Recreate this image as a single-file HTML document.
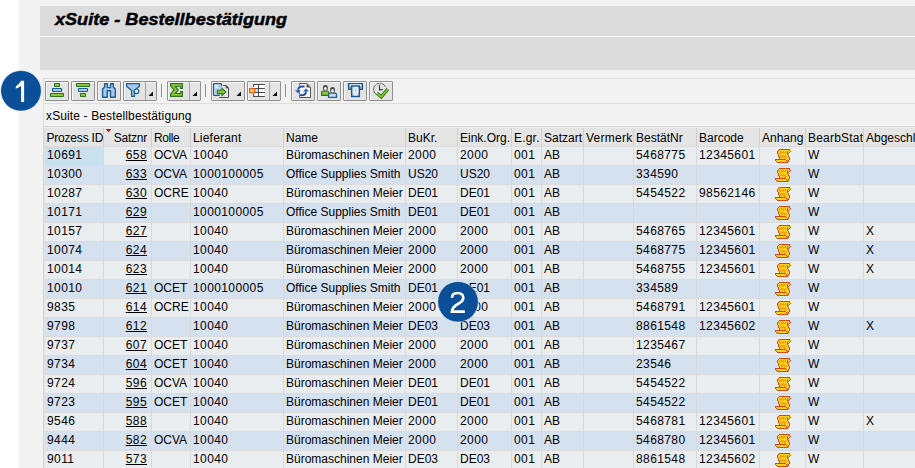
<!DOCTYPE html>
<html><head><meta charset="utf-8"><style>
*{margin:0;padding:0;box-sizing:border-box}
html,body{width:915px;height:468px;overflow:hidden;background:#fff;font-family:"Liberation Sans",sans-serif;font-size:12px;color:#000}
.abs{position:absolute}
#strip{position:absolute;left:19px;top:0;width:896px;height:468px;background:#f2f2f2}
#title{position:absolute;left:40px;top:6px;width:875px;height:30px;background:#dcdcdc}
#title span{position:absolute;left:15px;top:5px;font-size:16px;font-weight:bold;font-style:italic;white-space:nowrap;-webkit-text-stroke:0.45px #000;transform:scaleX(1.13);transform-origin:0 0}
#wl{position:absolute;left:40px;top:36px;width:875px;height:1px;background:#fafafa}
#box2{position:absolute;left:40px;top:37px;width:875px;height:33px;background:#dcdcdc}
#tb{position:absolute;left:43px;top:78px;width:872px;height:26px;border-top:1px solid #dedede;border-left:1px solid #dedede;border-bottom:1px solid #dedede;background:#f2f2f2}
#lbl{position:absolute;left:43px;top:104px;width:872px;height:23px;border-left:1px solid #dedede;background:#f2f2f2}
#lbl span{position:absolute;left:2px;top:5px;white-space:nowrap;letter-spacing:0.13px}
#hdrtop{position:absolute;left:43px;top:126px;width:872px;height:1px;background:#d8d8d8}
#hdrtop2{position:absolute;left:43px;top:127px;width:872px;height:1px;background:#eeeeee}
.hdrbg{position:absolute;left:43px;top:128px;width:872px;height:18px;background:#e5e5e5}
.hdrbot{position:absolute;left:43px;top:146px;width:872px;height:1px;background:#dcdcdc}
.vsep{position:absolute;top:128px;width:1px;height:18px;background:#cfcfcf}
.vsep2{position:absolute;top:147px;width:1px;height:321px;background:#d9d9d9}
.rowA,.rowB{position:absolute;left:45px;width:870px;height:18px}
.rowA{background:#eaedf0}
.rowB{background:#d6e1ef}
.gl{position:absolute;left:45px;width:870px;height:1px;background:#dcdcdc}
.selcell{position:absolute;left:45px;top:147px;width:58px;height:18px;background:#c9e0ee}
.h,.c{position:absolute;white-space:nowrap;overflow:hidden;padding:0 2px}
.h{line-height:20px}
.c{line-height:17px}
.c0{padding-left:3px}
.h0{padding-left:2.5px;letter-spacing:-0.2px}
.r{text-align:right;padding-right:4px}
.n{letter-spacing:0.4px}
.ic{position:absolute;overflow:hidden}
.scr{position:absolute;left:15px;top:2px}
#tableL{position:absolute;left:43px;top:126px;width:1px;height:342px;background:#d6d6d6}
#tableL2{position:absolute;left:44px;top:128px;width:1px;height:340px;background:#e2e2e2}
.badge{position:absolute;width:40px;height:40px;border-radius:50%;background:#044e96;color:#fff;font-size:29px;text-align:center;line-height:40px;box-shadow:0 0 0 1px rgba(255,255,255,0.8)}
</style></head><body>
<svg width="0" height="0" style="position:absolute"><defs><g id="scr"><path d="M4 0h1v1h-1zM5 0h1v1h-1zM6 0h1v1h-1zM7 0h1v1h-1zM8 0h1v1h-1zM9 0h1v1h-1zM10 0h1v1h-1zM11 0h1v1h-1zM12 0h1v1h-1zM13 0h1v1h-1zM14 0h1v1h-1zM3 1h1v1h-1zM14 1h1v1h-1zM2 2h1v1h-1zM12 2h1v1h-1zM15 2h1v1h-1zM2 3h1v1h-1zM12 3h1v1h-1zM14 3h1v1h-1zM2 4h1v1h-1zM12 4h1v1h-1zM13 4h1v1h-1zM3 5h1v1h-1zM12 5h1v1h-1zM3 6h1v1h-1zM13 6h1v1h-1zM3 7h1v1h-1zM13 7h1v1h-1zM4 8h1v1h-1zM14 8h1v1h-1zM4 9h1v1h-1zM14 9h1v1h-1zM0 10h1v1h-1zM1 10h1v1h-1zM2 10h1v1h-1zM3 10h1v1h-1zM4 10h1v1h-1zM5 10h1v1h-1zM6 10h1v1h-1zM7 10h1v1h-1zM8 10h1v1h-1zM9 10h1v1h-1zM10 10h1v1h-1zM14 10h1v1h-1zM0 11h1v1h-1zM11 11h1v1h-1zM13 11h1v1h-1zM1 12h1v1h-1zM12 12h1v1h-1zM13 12h1v1h-1zM2 13h1v1h-1zM3 13h1v1h-1zM4 13h1v1h-1zM5 13h1v1h-1zM6 13h1v1h-1zM7 13h1v1h-1zM8 13h1v1h-1zM9 13h1v1h-1zM10 13h1v1h-1zM11 13h1v1h-1zM12 13h1v1h-1z" fill="#d9470d"/><path d="M4 1h1v1h-1zM5 1h1v1h-1zM6 1h1v1h-1zM7 1h1v1h-1zM8 1h1v1h-1zM9 1h1v1h-1zM10 1h1v1h-1zM11 1h1v1h-1zM12 1h1v1h-1zM13 1h1v1h-1zM15 1h1v1h-1zM3 2h1v1h-1zM5 2h1v1h-1zM7 2h1v1h-1zM9 2h1v1h-1zM11 2h1v1h-1zM14 2h1v1h-1zM3 3h1v1h-1zM11 3h1v1h-1zM13 3h1v1h-1zM3 4h1v1h-1zM4 4h1v1h-1zM6 4h1v1h-1zM7 4h1v1h-1zM9 4h1v1h-1zM10 4h1v1h-1zM11 4h1v1h-1zM4 5h1v1h-1zM5 5h1v1h-1zM6 5h1v1h-1zM7 5h1v1h-1zM8 5h1v1h-1zM9 5h1v1h-1zM10 5h1v1h-1zM11 5h1v1h-1zM4 6h1v1h-1zM5 6h1v1h-1zM7 6h1v1h-1zM9 6h1v1h-1zM11 6h1v1h-1zM12 6h1v1h-1zM4 7h1v1h-1zM11 7h1v1h-1zM12 7h1v1h-1zM5 8h1v1h-1zM6 8h1v1h-1zM8 8h1v1h-1zM10 8h1v1h-1zM12 8h1v1h-1zM13 8h1v1h-1zM5 9h1v1h-1zM7 9h1v1h-1zM8 9h1v1h-1zM10 9h1v1h-1zM11 9h1v1h-1zM12 9h1v1h-1zM13 9h1v1h-1zM11 10h1v1h-1zM12 10h1v1h-1zM13 10h1v1h-1zM1 11h1v1h-1zM2 11h1v1h-1zM3 11h1v1h-1zM4 11h1v1h-1zM5 11h1v1h-1zM6 11h1v1h-1zM7 11h1v1h-1zM8 11h1v1h-1zM9 11h1v1h-1zM10 11h1v1h-1zM12 11h1v1h-1zM2 12h1v1h-1zM3 12h1v1h-1zM4 12h1v1h-1zM5 12h1v1h-1zM6 12h1v1h-1zM7 12h1v1h-1zM8 12h1v1h-1zM9 12h1v1h-1zM10 12h1v1h-1zM11 12h1v1h-1z" fill="#ffd21e"/><path d="M4 2h1v1h-1zM6 2h1v1h-1zM8 2h1v1h-1zM10 2h1v1h-1zM4 3h1v1h-1zM5 3h1v1h-1zM6 3h1v1h-1zM7 3h1v1h-1zM8 3h1v1h-1zM9 3h1v1h-1zM10 3h1v1h-1zM5 4h1v1h-1zM8 4h1v1h-1zM6 6h1v1h-1zM8 6h1v1h-1zM10 6h1v1h-1zM5 7h1v1h-1zM6 7h1v1h-1zM7 7h1v1h-1zM8 7h1v1h-1zM9 7h1v1h-1zM10 7h1v1h-1zM7 8h1v1h-1zM9 8h1v1h-1zM11 8h1v1h-1zM6 9h1v1h-1zM9 9h1v1h-1z" fill="#f59b12"/><path d="M13 2h1v1h-1z" fill="#fff0a0"/></g></defs></svg>
<div id="strip"></div>
<div id="title"><span>xSuite - Bestellbestätigung</span></div>
<div id="wl"></div>
<div id="box2"></div>
<div id="tb"></div>
<svg class="abs" style="left:0;top:0" width="915" height="104" viewBox="0 0 915 104"><rect x="45.5" y="81.5" width="23" height="19" rx="0.6" fill="#e3e3e3" stroke="#8f8f8f"/><path d="M46.5 100 V82.5 H68" fill="none" stroke="#f7f7f7"/><rect x="71.5" y="81.5" width="23" height="19" rx="0.6" fill="#e3e3e3" stroke="#8f8f8f"/><path d="M72.5 100 V82.5 H94" fill="none" stroke="#f7f7f7"/><rect x="97.5" y="81.5" width="23" height="19" rx="0.6" fill="#e3e3e3" stroke="#8f8f8f"/><path d="M98.5 100 V82.5 H120" fill="none" stroke="#f7f7f7"/><rect x="123.5" y="81.5" width="33" height="19" rx="0.6" fill="#e3e3e3" stroke="#8f8f8f"/><path d="M124.5 100 V82.5 H156" fill="none" stroke="#f7f7f7"/><line x1="145.5" y1="82" x2="145.5" y2="100" stroke="#a5a5a5"/><rect x="161" y="84" width="1" height="13" fill="#8c8c8c"/><rect x="162" y="84" width="1" height="13" fill="#fff" opacity="0.6"/><rect x="167.5" y="81.5" width="33" height="19" rx="0.6" fill="#e3e3e3" stroke="#8f8f8f"/><path d="M168.5 100 V82.5 H200" fill="none" stroke="#f7f7f7"/><line x1="189.5" y1="82" x2="189.5" y2="100" stroke="#a5a5a5"/><rect x="205" y="84" width="1" height="13" fill="#8c8c8c"/><rect x="206" y="84" width="1" height="13" fill="#fff" opacity="0.6"/><rect x="211.5" y="81.5" width="33" height="19" rx="0.6" fill="#e3e3e3" stroke="#8f8f8f"/><path d="M212.5 100 V82.5 H244" fill="none" stroke="#f7f7f7"/><rect x="247.5" y="81.5" width="33" height="19" rx="0.6" fill="#e3e3e3" stroke="#8f8f8f"/><path d="M248.5 100 V82.5 H280" fill="none" stroke="#f7f7f7"/><line x1="269.5" y1="82" x2="269.5" y2="100" stroke="#a5a5a5"/><rect x="285" y="84" width="1" height="13" fill="#8c8c8c"/><rect x="286" y="84" width="1" height="13" fill="#fff" opacity="0.6"/><rect x="291.5" y="81.5" width="23" height="19" rx="0.6" fill="#e3e3e3" stroke="#8f8f8f"/><path d="M292.5 100 V82.5 H314" fill="none" stroke="#f7f7f7"/><rect x="317.5" y="81.5" width="23" height="19" rx="0.6" fill="#e3e3e3" stroke="#8f8f8f"/><path d="M318.5 100 V82.5 H340" fill="none" stroke="#f7f7f7"/><rect x="343.5" y="81.5" width="23" height="19" rx="0.6" fill="#e3e3e3" stroke="#8f8f8f"/><path d="M344.5 100 V82.5 H366" fill="none" stroke="#f7f7f7"/><rect x="369.5" y="81.5" width="23" height="19" rx="0.6" fill="#e3e3e3" stroke="#8f8f8f"/><path d="M370.5 100 V82.5 H392" fill="none" stroke="#f7f7f7"/><path d="M148.4 96 L153 96 L153 91.4 Z" fill="#111"/><path d="M192.4 96 L197 96 L197 91.4 Z" fill="#111"/><path d="M236.4 96 L241 96 L241 91.4 Z" fill="#111"/><path d="M272.4 96 L277 96 L277 91.4 Z" fill="#111"/><rect x="54.5" y="83.5" width="5" height="3" rx="0.4" fill="#8cc63a" stroke="#2f7420" stroke-width="1.1"/><rect x="52.5" y="88.5" width="9" height="3" rx="0.4" fill="#a9c8e6" stroke="#17609a" stroke-width="1.1"/><rect x="50.5" y="93.5" width="13" height="3" rx="0.4" fill="#8cc63a" stroke="#2f7420" stroke-width="1.1"/><rect x="76.5" y="83.5" width="13" height="3" rx="0.4" fill="#8cc63a" stroke="#2f7420" stroke-width="1.1"/><rect x="78.5" y="88.5" width="9" height="3" rx="0.4" fill="#a9c8e6" stroke="#17609a" stroke-width="1.1"/><rect x="80.5" y="93.5" width="5" height="3" rx="0.4" fill="#8cc63a" stroke="#2f7420" stroke-width="1.1"/><path d="M104.6 83.7 H107.3 V87.6 H110.5 V83.7 H113.3 V87 L115.3 89 V97.3 H110.5 V90.7 H107.3 V97.3 H102.6 V89 L104.6 87 Z" fill="#a9c8e6" stroke="#17609a" stroke-width="1.4" stroke-linejoin="round"/><path d="M126.6 83.6 H139.4 V86.3 L134.4 90.4 V96.4 H131.6 V90.4 L126.6 86.3 Z" fill="#a9c8e6" stroke="#17609a" stroke-width="1.3" stroke-linejoin="round"/><circle cx="136.5" cy="91.3" r="2.3" fill="#eef2f5" stroke="#17609a" stroke-width="1.2"/><rect x="175.5" y="86.5" width="6" height="7" fill="#fafafa"/><path d="M170.6 83.6 H182.4 V88.3 H180.3 V86.5 H175.4 L178.4 90 L175.4 93.5 H180.3 V91.7 H182.4 V96.4 H170.6 V94.3 L174 90 L170.6 85.7 Z" fill="#8cc63a" stroke="#2f7420" stroke-width="1.2" stroke-linejoin="miter"/><path d="M223 85.5 H226.2 L228.5 87.8 V97.5 H219.2" fill="none" stroke="#505050" stroke-width="1"/><path d="M226 85.5 V88 H228.5 Z" fill="#505050" stroke="#505050" stroke-width="0.6"/><path d="M221.4 86.3 V84.3 Q221.4 83.6 220.6 83.6 H214.2 Q213.5 83.6 213.5 84.3 V94.8 Q213.5 95.4 214.2 95.4 H219.7" fill="#a9c8e6" stroke="#17609a" stroke-width="1.3"/><rect x="214.3" y="84.4" width="6.4" height="10.3" fill="#b3cfe9"/><path d="M214.8 85.6 H218 M214.8 87.4 H218" stroke="#fff" stroke-width="0.9"/><path d="M217.4 90.2 H222 V88.2 L225.8 91.9 L222 95.5 V93.6 H217.4 Z" fill="#8cc63a" stroke="#2f7420" stroke-width="1.1" stroke-linejoin="miter"/><rect x="254" y="85" width="10.5" height="12" fill="#fff"/><path d="M254 84.5 H264.8 M254 88.5 H264.8 M254 92.5 H264.8 M254 96.5 H264.8 M258.5 84.5 V96.5 M253.7 84 V87 M253.7 93.5 V97" stroke="#4a4a4a" stroke-width="1.1"/><rect x="255" y="89" width="3" height="3" fill="#d4d4d4"/><rect x="249.6" y="88.6" width="5" height="4" fill="#f9d548" stroke="#e4632a" stroke-width="1.3"/><path d="M299.5 83.5 H306.8 L310.5 87.2 V97.5 H299.5 Z" fill="#fff" stroke="#505050" stroke-width="1"/><path d="M306.5 83.5 L310.5 87.5 H306.5 Z" fill="#505050"/><path d="M298 90.6 Q298.2 86.6 302 86.6 H304.6" fill="none" stroke="#fff" stroke-width="3" opacity="0.9"/><path d="M306 91.4 Q305.8 95.2 302 95.2 H299.4" fill="none" stroke="#fff" stroke-width="3" opacity="0.9"/><path d="M298 90.6 Q298.2 86.6 302 86.6 H304.6" fill="none" stroke="#1c4ea6" stroke-width="2"/><path d="M306 91.4 Q305.8 95.2 302 95.2 H299.4" fill="none" stroke="#1c4ea6" stroke-width="2"/><path d="M294.8 90 H301.2 L298 93.6 Z M302.8 91.8 H309.2 L306 88.2 Z" fill="#1c4ea6" stroke="#fff" stroke-width="0.4"/><path d="M321.6 95.3 V92.6 Q321.6 91 323.3 91 H327 Q328.6 91 328.6 92.6 V95.3 Z" fill="#8cc63a" stroke="#2f7420" stroke-width="1.2"/><ellipse cx="325.4" cy="87.9" rx="2.5" ry="2.9" fill="#474747"/><ellipse cx="325.4" cy="88.6" rx="1.3" ry="1.8" fill="#fff"/><path d="M328.6 97.4 V94.7 Q328.6 93.1 330.3 93.1 H334.8 Q336.5 93.1 336.5 94.7 V97.4 Z" fill="#c8def2" stroke="#17609a" stroke-width="1.3"/><ellipse cx="332.5" cy="90" rx="2.5" ry="2.9" fill="#474747"/><ellipse cx="332.5" cy="90.7" rx="1.3" ry="1.8" fill="#fff"/><rect x="348.7" y="83.7" width="13.6" height="5.5" fill="#e8eef4" stroke="#0f5996" stroke-width="1.5"/><rect x="349.5" y="84.4" width="12" height="1" fill="#fff"/><rect x="349.3" y="86.3" width="1.5" height="2.4" fill="#9d8576"/><rect x="360.2" y="86.3" width="1.5" height="2.4" fill="#9d8576"/><rect x="351.7" y="86" width="7.6" height="10.4" fill="#fff" stroke="#0f5996" stroke-width="1.5"/><path d="M352.5 86.8 L356 90.5 L352.5 95.8 M358.5 86.8 L355 90.5 L358.5 95.8" stroke="#3d6fa6" stroke-width="0.6" stroke-dasharray="1 0.6" fill="none"/><path d="M385.3 86.6 A6.2 6.2 0 1 0 376 94.4" fill="none" stroke="#3d3d3d" stroke-width="1" stroke-dasharray="1.8 0.7"/><path d="M379.5 85 V90.4 M379.5 89.6 H382.8" fill="none" stroke="#3d3d3d" stroke-width="1.1"/><path d="M377 93.3 L381.3 96.8 L387.8 89.2" fill="none" stroke="#2f7420" stroke-width="3.4" stroke-linejoin="miter"/><path d="M377 93.3 L381.3 96.8 L387.8 89.2" fill="none" stroke="#86c630" stroke-width="1.6" stroke-linejoin="miter"/></svg>
<div id="lbl"><span>xSuite - Bestellbestätigung</span></div>
<div id="hdrtop"></div><div id="hdrtop2"></div>
<div class="hdrbg"></div><div class="hdrbot"></div>
<div class="vsep" style="left:103px"></div>
<div class="vsep" style="left:151px"></div>
<div class="vsep" style="left:190px"></div>
<div class="vsep" style="left:283px"></div>
<div class="vsep" style="left:405px"></div>
<div class="vsep" style="left:457px"></div>
<div class="vsep" style="left:511px"></div>
<div class="vsep" style="left:541px"></div>
<div class="vsep" style="left:583px"></div>
<div class="vsep" style="left:633px"></div>
<div class="vsep" style="left:696px"></div>
<div class="vsep" style="left:759px"></div>
<div class="vsep" style="left:805px"></div>
<div class="vsep" style="left:863px"></div>
<div class="h h0" style="left:44px;top:128px;width:59px;height:18px">Prozess ID</div>
<div class="h r" style="left:104px;top:128px;width:47px;height:18px;letter-spacing:-0.25px">Satznr</div>
<div class="h" style="left:152px;top:128px;width:38px;height:18px;letter-spacing:-0.4px">Rolle</div>
<div class="h" style="left:191px;top:128px;width:92px;height:18px;letter-spacing:0.2px">Lieferant</div>
<div class="h" style="left:284px;top:128px;width:121px;height:18px">Name</div>
<div class="h" style="left:406px;top:128px;width:51px;height:18px">BuKr.</div>
<div class="h" style="left:458px;top:128px;width:53px;height:18px">Eink.Org.</div>
<div class="h" style="left:512px;top:128px;width:29px;height:18px;letter-spacing:0.2px">E.gr.</div>
<div class="h" style="left:542px;top:128px;width:41px;height:18px">Satzart</div>
<div class="h" style="left:584px;top:128px;width:49px;height:18px;letter-spacing:0.25px">Vermerk</div>
<div class="h" style="left:634px;top:128px;width:62px;height:18px">BestätNr</div>
<div class="h" style="left:697px;top:128px;width:62px;height:18px">Barcode</div>
<div class="h" style="left:760px;top:128px;width:45px;height:18px">Anhang</div>
<div class="h" style="left:806px;top:128px;width:57px;height:18px;letter-spacing:0.2px">BearbStat</div>
<div class="h" style="left:864px;top:128px;width:136px;height:18px">Abgeschl</div>
<svg class="abs" style="left:105px;top:128px" width="8" height="6"><path d="M0.8 1 H6.2 L3.5 4.2 Z" fill="#c8001e"/></svg>
<div class="rowA" style="top:147px"></div>
<div class="gl" style="top:165px"></div>
<div class="rowB" style="top:166px"></div>
<div class="gl" style="top:184px"></div>
<div class="rowA" style="top:185px"></div>
<div class="gl" style="top:203px"></div>
<div class="rowB" style="top:204px"></div>
<div class="gl" style="top:222px"></div>
<div class="rowA" style="top:223px"></div>
<div class="gl" style="top:241px"></div>
<div class="rowB" style="top:242px"></div>
<div class="gl" style="top:260px"></div>
<div class="rowA" style="top:261px"></div>
<div class="gl" style="top:279px"></div>
<div class="rowB" style="top:280px"></div>
<div class="gl" style="top:298px"></div>
<div class="rowA" style="top:299px"></div>
<div class="gl" style="top:317px"></div>
<div class="rowB" style="top:318px"></div>
<div class="gl" style="top:336px"></div>
<div class="rowA" style="top:337px"></div>
<div class="gl" style="top:355px"></div>
<div class="rowB" style="top:356px"></div>
<div class="gl" style="top:374px"></div>
<div class="rowA" style="top:375px"></div>
<div class="gl" style="top:393px"></div>
<div class="rowB" style="top:394px"></div>
<div class="gl" style="top:412px"></div>
<div class="rowA" style="top:413px"></div>
<div class="gl" style="top:431px"></div>
<div class="rowB" style="top:432px"></div>
<div class="gl" style="top:450px"></div>
<div class="rowA" style="top:451px"></div>
<div class="gl" style="top:469px"></div>
<div class="selcell"></div>
<div class="vsep2" style="left:103px"></div>
<div class="vsep2" style="left:151px"></div>
<div class="vsep2" style="left:190px"></div>
<div class="vsep2" style="left:283px"></div>
<div class="vsep2" style="left:405px"></div>
<div class="vsep2" style="left:457px"></div>
<div class="vsep2" style="left:511px"></div>
<div class="vsep2" style="left:541px"></div>
<div class="vsep2" style="left:583px"></div>
<div class="vsep2" style="left:633px"></div>
<div class="vsep2" style="left:696px"></div>
<div class="vsep2" style="left:759px"></div>
<div class="vsep2" style="left:805px"></div>
<div class="vsep2" style="left:863px"></div>
<div class="c c0 n" style="left:44px;top:147px;width:59px;height:18px">10691</div>
<div class="c r n" style="left:104px;top:147px;width:47px;height:18px"><u>658</u></div>
<div class="c" style="left:152px;top:147px;width:38px;height:18px">OCVA</div>
<div class="c n" style="left:191px;top:147px;width:92px;height:18px">10040</div>
<div class="c" style="left:284px;top:147px;width:121px;height:18px">Büromaschinen Meier</div>
<div class="c n" style="left:406px;top:147px;width:51px;height:18px">2000</div>
<div class="c n" style="left:458px;top:147px;width:53px;height:18px">2000</div>
<div class="c n" style="left:512px;top:147px;width:29px;height:18px">001</div>
<div class="c" style="left:542px;top:147px;width:41px;height:18px">AB</div>
<div class="c n" style="left:634px;top:147px;width:62px;height:18px">5468775</div>
<div class="c n" style="left:697px;top:147px;width:62px;height:18px">12345601</div>
<div class="ic" style="left:760px;top:147px;width:45px;height:18px"><svg class="scr" width="16" height="14" viewBox="0 0 16 14" shape-rendering="crispEdges"><use href="#scr"/></svg></div>
<div class="c" style="left:806px;top:147px;width:57px;height:18px">W</div>
<div class="c c0 n" style="left:44px;top:166px;width:59px;height:18px">10300</div>
<div class="c r n" style="left:104px;top:166px;width:47px;height:18px"><u>633</u></div>
<div class="c" style="left:152px;top:166px;width:38px;height:18px">OCVA</div>
<div class="c n" style="left:191px;top:166px;width:92px;height:18px">1000100005</div>
<div class="c" style="left:284px;top:166px;width:121px;height:18px">Office Supplies Smith</div>
<div class="c" style="left:406px;top:166px;width:51px;height:18px">US20</div>
<div class="c" style="left:458px;top:166px;width:53px;height:18px">US20</div>
<div class="c n" style="left:512px;top:166px;width:29px;height:18px">001</div>
<div class="c" style="left:542px;top:166px;width:41px;height:18px">AB</div>
<div class="c n" style="left:634px;top:166px;width:62px;height:18px">334590</div>
<div class="ic" style="left:760px;top:166px;width:45px;height:18px"><svg class="scr" width="16" height="14" viewBox="0 0 16 14" shape-rendering="crispEdges"><use href="#scr"/></svg></div>
<div class="c" style="left:806px;top:166px;width:57px;height:18px">W</div>
<div class="c c0 n" style="left:44px;top:185px;width:59px;height:18px">10287</div>
<div class="c r n" style="left:104px;top:185px;width:47px;height:18px"><u>630</u></div>
<div class="c" style="left:152px;top:185px;width:38px;height:18px">OCRE</div>
<div class="c n" style="left:191px;top:185px;width:92px;height:18px">10040</div>
<div class="c" style="left:284px;top:185px;width:121px;height:18px">Büromaschinen Meier</div>
<div class="c" style="left:406px;top:185px;width:51px;height:18px">DE01</div>
<div class="c" style="left:458px;top:185px;width:53px;height:18px">DE01</div>
<div class="c n" style="left:512px;top:185px;width:29px;height:18px">001</div>
<div class="c" style="left:542px;top:185px;width:41px;height:18px">AB</div>
<div class="c n" style="left:634px;top:185px;width:62px;height:18px">5454522</div>
<div class="c n" style="left:697px;top:185px;width:62px;height:18px">98562146</div>
<div class="ic" style="left:760px;top:185px;width:45px;height:18px"><svg class="scr" width="16" height="14" viewBox="0 0 16 14" shape-rendering="crispEdges"><use href="#scr"/></svg></div>
<div class="c" style="left:806px;top:185px;width:57px;height:18px">W</div>
<div class="c c0 n" style="left:44px;top:204px;width:59px;height:18px">10171</div>
<div class="c r n" style="left:104px;top:204px;width:47px;height:18px"><u>629</u></div>
<div class="c n" style="left:191px;top:204px;width:92px;height:18px">1000100005</div>
<div class="c" style="left:284px;top:204px;width:121px;height:18px">Office Supplies Smith</div>
<div class="c" style="left:406px;top:204px;width:51px;height:18px">DE01</div>
<div class="c" style="left:458px;top:204px;width:53px;height:18px">DE01</div>
<div class="c n" style="left:512px;top:204px;width:29px;height:18px">001</div>
<div class="c" style="left:542px;top:204px;width:41px;height:18px">AB</div>
<div class="ic" style="left:760px;top:204px;width:45px;height:18px"><svg class="scr" width="16" height="14" viewBox="0 0 16 14" shape-rendering="crispEdges"><use href="#scr"/></svg></div>
<div class="c" style="left:806px;top:204px;width:57px;height:18px">W</div>
<div class="c c0 n" style="left:44px;top:223px;width:59px;height:18px">10157</div>
<div class="c r n" style="left:104px;top:223px;width:47px;height:18px"><u>627</u></div>
<div class="c n" style="left:191px;top:223px;width:92px;height:18px">10040</div>
<div class="c" style="left:284px;top:223px;width:121px;height:18px">Büromaschinen Meier</div>
<div class="c n" style="left:406px;top:223px;width:51px;height:18px">2000</div>
<div class="c n" style="left:458px;top:223px;width:53px;height:18px">2000</div>
<div class="c n" style="left:512px;top:223px;width:29px;height:18px">001</div>
<div class="c" style="left:542px;top:223px;width:41px;height:18px">AB</div>
<div class="c n" style="left:634px;top:223px;width:62px;height:18px">5468765</div>
<div class="c n" style="left:697px;top:223px;width:62px;height:18px">12345601</div>
<div class="ic" style="left:760px;top:223px;width:45px;height:18px"><svg class="scr" width="16" height="14" viewBox="0 0 16 14" shape-rendering="crispEdges"><use href="#scr"/></svg></div>
<div class="c" style="left:806px;top:223px;width:57px;height:18px">W</div>
<div class="c" style="left:864px;top:223px;width:136px;height:18px">X</div>
<div class="c c0 n" style="left:44px;top:242px;width:59px;height:18px">10074</div>
<div class="c r n" style="left:104px;top:242px;width:47px;height:18px"><u>624</u></div>
<div class="c n" style="left:191px;top:242px;width:92px;height:18px">10040</div>
<div class="c" style="left:284px;top:242px;width:121px;height:18px">Büromaschinen Meier</div>
<div class="c n" style="left:406px;top:242px;width:51px;height:18px">2000</div>
<div class="c n" style="left:458px;top:242px;width:53px;height:18px">2000</div>
<div class="c n" style="left:512px;top:242px;width:29px;height:18px">001</div>
<div class="c" style="left:542px;top:242px;width:41px;height:18px">AB</div>
<div class="c n" style="left:634px;top:242px;width:62px;height:18px">5468775</div>
<div class="c n" style="left:697px;top:242px;width:62px;height:18px">12345601</div>
<div class="ic" style="left:760px;top:242px;width:45px;height:18px"><svg class="scr" width="16" height="14" viewBox="0 0 16 14" shape-rendering="crispEdges"><use href="#scr"/></svg></div>
<div class="c" style="left:806px;top:242px;width:57px;height:18px">W</div>
<div class="c" style="left:864px;top:242px;width:136px;height:18px">X</div>
<div class="c c0 n" style="left:44px;top:261px;width:59px;height:18px">10014</div>
<div class="c r n" style="left:104px;top:261px;width:47px;height:18px"><u>623</u></div>
<div class="c n" style="left:191px;top:261px;width:92px;height:18px">10040</div>
<div class="c" style="left:284px;top:261px;width:121px;height:18px">Büromaschinen Meier</div>
<div class="c n" style="left:406px;top:261px;width:51px;height:18px">2000</div>
<div class="c n" style="left:458px;top:261px;width:53px;height:18px">2000</div>
<div class="c n" style="left:512px;top:261px;width:29px;height:18px">001</div>
<div class="c" style="left:542px;top:261px;width:41px;height:18px">AB</div>
<div class="c n" style="left:634px;top:261px;width:62px;height:18px">5468755</div>
<div class="c n" style="left:697px;top:261px;width:62px;height:18px">12345601</div>
<div class="ic" style="left:760px;top:261px;width:45px;height:18px"><svg class="scr" width="16" height="14" viewBox="0 0 16 14" shape-rendering="crispEdges"><use href="#scr"/></svg></div>
<div class="c" style="left:806px;top:261px;width:57px;height:18px">W</div>
<div class="c" style="left:864px;top:261px;width:136px;height:18px">X</div>
<div class="c c0 n" style="left:44px;top:280px;width:59px;height:18px">10010</div>
<div class="c r n" style="left:104px;top:280px;width:47px;height:18px"><u>621</u></div>
<div class="c" style="left:152px;top:280px;width:38px;height:18px">OCET</div>
<div class="c n" style="left:191px;top:280px;width:92px;height:18px">1000100005</div>
<div class="c" style="left:284px;top:280px;width:121px;height:18px">Office Supplies Smith</div>
<div class="c" style="left:406px;top:280px;width:51px;height:18px">DE01</div>
<div class="c" style="left:458px;top:280px;width:53px;height:18px">DE01</div>
<div class="c n" style="left:512px;top:280px;width:29px;height:18px">001</div>
<div class="c" style="left:542px;top:280px;width:41px;height:18px">AB</div>
<div class="c n" style="left:634px;top:280px;width:62px;height:18px">334589</div>
<div class="ic" style="left:760px;top:280px;width:45px;height:18px"><svg class="scr" width="16" height="14" viewBox="0 0 16 14" shape-rendering="crispEdges"><use href="#scr"/></svg></div>
<div class="c" style="left:806px;top:280px;width:57px;height:18px">W</div>
<div class="c c0 n" style="left:44px;top:299px;width:59px;height:18px">9835</div>
<div class="c r n" style="left:104px;top:299px;width:47px;height:18px"><u>614</u></div>
<div class="c" style="left:152px;top:299px;width:38px;height:18px">OCRE</div>
<div class="c n" style="left:191px;top:299px;width:92px;height:18px">10040</div>
<div class="c" style="left:284px;top:299px;width:121px;height:18px">Büromaschinen Meier</div>
<div class="c n" style="left:406px;top:299px;width:51px;height:18px">2000</div>
<div class="c n" style="left:458px;top:299px;width:53px;height:18px">2000</div>
<div class="c n" style="left:512px;top:299px;width:29px;height:18px">001</div>
<div class="c" style="left:542px;top:299px;width:41px;height:18px">AB</div>
<div class="c n" style="left:634px;top:299px;width:62px;height:18px">5468791</div>
<div class="c n" style="left:697px;top:299px;width:62px;height:18px">12345601</div>
<div class="ic" style="left:760px;top:299px;width:45px;height:18px"><svg class="scr" width="16" height="14" viewBox="0 0 16 14" shape-rendering="crispEdges"><use href="#scr"/></svg></div>
<div class="c" style="left:806px;top:299px;width:57px;height:18px">W</div>
<div class="c c0 n" style="left:44px;top:318px;width:59px;height:18px">9798</div>
<div class="c r n" style="left:104px;top:318px;width:47px;height:18px"><u>612</u></div>
<div class="c n" style="left:191px;top:318px;width:92px;height:18px">10040</div>
<div class="c" style="left:284px;top:318px;width:121px;height:18px">Büromaschinen Meier</div>
<div class="c" style="left:406px;top:318px;width:51px;height:18px">DE03</div>
<div class="c" style="left:458px;top:318px;width:53px;height:18px">DE03</div>
<div class="c n" style="left:512px;top:318px;width:29px;height:18px">001</div>
<div class="c" style="left:542px;top:318px;width:41px;height:18px">AB</div>
<div class="c n" style="left:634px;top:318px;width:62px;height:18px">8861548</div>
<div class="c n" style="left:697px;top:318px;width:62px;height:18px">12345602</div>
<div class="ic" style="left:760px;top:318px;width:45px;height:18px"><svg class="scr" width="16" height="14" viewBox="0 0 16 14" shape-rendering="crispEdges"><use href="#scr"/></svg></div>
<div class="c" style="left:806px;top:318px;width:57px;height:18px">W</div>
<div class="c" style="left:864px;top:318px;width:136px;height:18px">X</div>
<div class="c c0 n" style="left:44px;top:337px;width:59px;height:18px">9737</div>
<div class="c r n" style="left:104px;top:337px;width:47px;height:18px"><u>607</u></div>
<div class="c" style="left:152px;top:337px;width:38px;height:18px">OCET</div>
<div class="c n" style="left:191px;top:337px;width:92px;height:18px">10040</div>
<div class="c" style="left:284px;top:337px;width:121px;height:18px">Büromaschinen Meier</div>
<div class="c n" style="left:406px;top:337px;width:51px;height:18px">2000</div>
<div class="c n" style="left:458px;top:337px;width:53px;height:18px">2000</div>
<div class="c n" style="left:512px;top:337px;width:29px;height:18px">001</div>
<div class="c" style="left:542px;top:337px;width:41px;height:18px">AB</div>
<div class="c n" style="left:634px;top:337px;width:62px;height:18px">1235467</div>
<div class="ic" style="left:760px;top:337px;width:45px;height:18px"><svg class="scr" width="16" height="14" viewBox="0 0 16 14" shape-rendering="crispEdges"><use href="#scr"/></svg></div>
<div class="c" style="left:806px;top:337px;width:57px;height:18px">W</div>
<div class="c c0 n" style="left:44px;top:356px;width:59px;height:18px">9734</div>
<div class="c r n" style="left:104px;top:356px;width:47px;height:18px"><u>604</u></div>
<div class="c" style="left:152px;top:356px;width:38px;height:18px">OCET</div>
<div class="c n" style="left:191px;top:356px;width:92px;height:18px">10040</div>
<div class="c" style="left:284px;top:356px;width:121px;height:18px">Büromaschinen Meier</div>
<div class="c n" style="left:406px;top:356px;width:51px;height:18px">2000</div>
<div class="c n" style="left:458px;top:356px;width:53px;height:18px">2000</div>
<div class="c n" style="left:512px;top:356px;width:29px;height:18px">001</div>
<div class="c" style="left:542px;top:356px;width:41px;height:18px">AB</div>
<div class="c n" style="left:634px;top:356px;width:62px;height:18px">23546</div>
<div class="ic" style="left:760px;top:356px;width:45px;height:18px"><svg class="scr" width="16" height="14" viewBox="0 0 16 14" shape-rendering="crispEdges"><use href="#scr"/></svg></div>
<div class="c" style="left:806px;top:356px;width:57px;height:18px">W</div>
<div class="c c0 n" style="left:44px;top:375px;width:59px;height:18px">9724</div>
<div class="c r n" style="left:104px;top:375px;width:47px;height:18px"><u>596</u></div>
<div class="c" style="left:152px;top:375px;width:38px;height:18px">OCVA</div>
<div class="c n" style="left:191px;top:375px;width:92px;height:18px">10040</div>
<div class="c" style="left:284px;top:375px;width:121px;height:18px">Büromaschinen Meier</div>
<div class="c" style="left:406px;top:375px;width:51px;height:18px">DE01</div>
<div class="c" style="left:458px;top:375px;width:53px;height:18px">DE01</div>
<div class="c n" style="left:512px;top:375px;width:29px;height:18px">001</div>
<div class="c" style="left:542px;top:375px;width:41px;height:18px">AB</div>
<div class="c n" style="left:634px;top:375px;width:62px;height:18px">5454522</div>
<div class="ic" style="left:760px;top:375px;width:45px;height:18px"><svg class="scr" width="16" height="14" viewBox="0 0 16 14" shape-rendering="crispEdges"><use href="#scr"/></svg></div>
<div class="c" style="left:806px;top:375px;width:57px;height:18px">W</div>
<div class="c c0 n" style="left:44px;top:394px;width:59px;height:18px">9723</div>
<div class="c r n" style="left:104px;top:394px;width:47px;height:18px"><u>595</u></div>
<div class="c" style="left:152px;top:394px;width:38px;height:18px">OCET</div>
<div class="c n" style="left:191px;top:394px;width:92px;height:18px">10040</div>
<div class="c" style="left:284px;top:394px;width:121px;height:18px">Büromaschinen Meier</div>
<div class="c" style="left:406px;top:394px;width:51px;height:18px">DE01</div>
<div class="c" style="left:458px;top:394px;width:53px;height:18px">DE01</div>
<div class="c n" style="left:512px;top:394px;width:29px;height:18px">001</div>
<div class="c" style="left:542px;top:394px;width:41px;height:18px">AB</div>
<div class="c n" style="left:634px;top:394px;width:62px;height:18px">5454522</div>
<div class="ic" style="left:760px;top:394px;width:45px;height:18px"><svg class="scr" width="16" height="14" viewBox="0 0 16 14" shape-rendering="crispEdges"><use href="#scr"/></svg></div>
<div class="c" style="left:806px;top:394px;width:57px;height:18px">W</div>
<div class="c c0 n" style="left:44px;top:413px;width:59px;height:18px">9546</div>
<div class="c r n" style="left:104px;top:413px;width:47px;height:18px"><u>588</u></div>
<div class="c n" style="left:191px;top:413px;width:92px;height:18px">10040</div>
<div class="c" style="left:284px;top:413px;width:121px;height:18px">Büromaschinen Meier</div>
<div class="c n" style="left:406px;top:413px;width:51px;height:18px">2000</div>
<div class="c n" style="left:458px;top:413px;width:53px;height:18px">2000</div>
<div class="c n" style="left:512px;top:413px;width:29px;height:18px">001</div>
<div class="c" style="left:542px;top:413px;width:41px;height:18px">AB</div>
<div class="c n" style="left:634px;top:413px;width:62px;height:18px">5468781</div>
<div class="c n" style="left:697px;top:413px;width:62px;height:18px">12345601</div>
<div class="ic" style="left:760px;top:413px;width:45px;height:18px"><svg class="scr" width="16" height="14" viewBox="0 0 16 14" shape-rendering="crispEdges"><use href="#scr"/></svg></div>
<div class="c" style="left:806px;top:413px;width:57px;height:18px">W</div>
<div class="c" style="left:864px;top:413px;width:136px;height:18px">X</div>
<div class="c c0 n" style="left:44px;top:432px;width:59px;height:18px">9444</div>
<div class="c r n" style="left:104px;top:432px;width:47px;height:18px"><u>582</u></div>
<div class="c" style="left:152px;top:432px;width:38px;height:18px">OCVA</div>
<div class="c n" style="left:191px;top:432px;width:92px;height:18px">10040</div>
<div class="c" style="left:284px;top:432px;width:121px;height:18px">Büromaschinen Meier</div>
<div class="c n" style="left:406px;top:432px;width:51px;height:18px">2000</div>
<div class="c n" style="left:458px;top:432px;width:53px;height:18px">2000</div>
<div class="c n" style="left:512px;top:432px;width:29px;height:18px">001</div>
<div class="c" style="left:542px;top:432px;width:41px;height:18px">AB</div>
<div class="c n" style="left:634px;top:432px;width:62px;height:18px">5468780</div>
<div class="c n" style="left:697px;top:432px;width:62px;height:18px">12345601</div>
<div class="ic" style="left:760px;top:432px;width:45px;height:18px"><svg class="scr" width="16" height="14" viewBox="0 0 16 14" shape-rendering="crispEdges"><use href="#scr"/></svg></div>
<div class="c" style="left:806px;top:432px;width:57px;height:18px">W</div>
<div class="c c0 n" style="left:44px;top:451px;width:59px;height:18px">9011</div>
<div class="c r n" style="left:104px;top:451px;width:47px;height:18px"><u>573</u></div>
<div class="c n" style="left:191px;top:451px;width:92px;height:18px">10040</div>
<div class="c" style="left:284px;top:451px;width:121px;height:18px">Büromaschinen Meier</div>
<div class="c" style="left:406px;top:451px;width:51px;height:18px">DE03</div>
<div class="c" style="left:458px;top:451px;width:53px;height:18px">DE03</div>
<div class="c n" style="left:512px;top:451px;width:29px;height:18px">001</div>
<div class="c" style="left:542px;top:451px;width:41px;height:18px">AB</div>
<div class="c n" style="left:634px;top:451px;width:62px;height:18px">8861548</div>
<div class="c n" style="left:697px;top:451px;width:62px;height:18px">12345602</div>
<div class="ic" style="left:760px;top:451px;width:45px;height:18px"><svg class="scr" width="16" height="14" viewBox="0 0 16 14" shape-rendering="crispEdges"><use href="#scr"/></svg></div>
<div class="c" style="left:806px;top:451px;width:57px;height:18px">W</div>
<div id="tableL"></div><div id="tableL2"></div>
<svg class="abs" style="left:0;top:0" width="915" height="468" viewBox="0 0 915 468">
<circle cx="21" cy="90.8" r="20.3" fill="#0a4f97" stroke="#ffffff" stroke-opacity="0.7" stroke-width="0.8"/>
<path d="M21.1 80.8 H24.1 V102 H21.1 V85.8 Q18.8 87.8 15.8 88.8 V86.2 Q19.4 84.4 21.1 80.8 Z" fill="#fff"/>
<circle cx="458" cy="301.8" r="20.3" fill="#0a4f97" stroke="#ffffff" stroke-opacity="0.7" stroke-width="0.8"/>
<path d="M452 297.8 C452 294.3 454.3 293 457.6 293 C461 293 463.3 295 463.3 297.9 C463.3 300.8 461 302.2 458.3 303.7 C454.8 305.7 452.1 307.6 451.9 311.6 H464.8" fill="none" stroke="#fff" stroke-width="2.7"/>
</svg>
</body></html>
